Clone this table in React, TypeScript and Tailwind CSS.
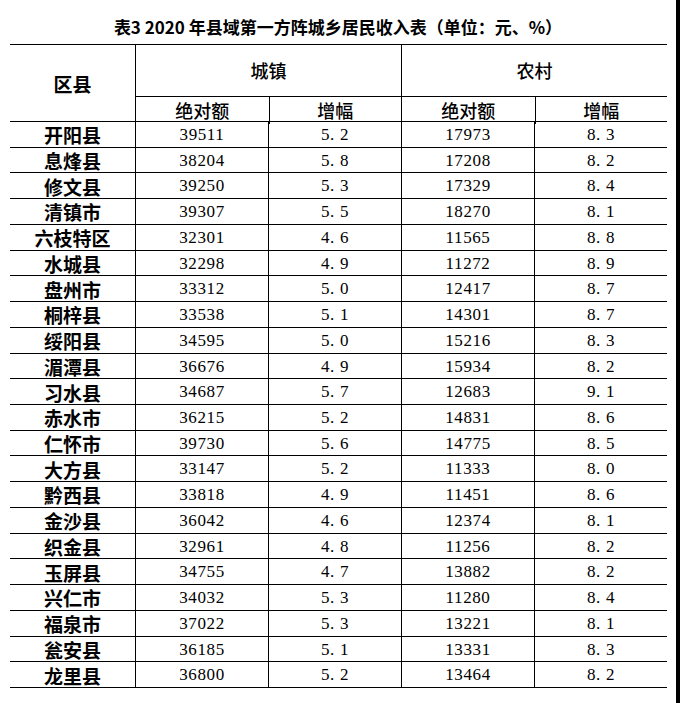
const rows: [string, string, string, string, string][] = [
  ["开阳县", "39511", "5.2", "17973", "8.3"],
  ["息烽县", "38204", "5.8", "17208", "8.2"],
  ["修文县", "39250", "5.3", "17329", "8.4"],
  ["清镇市", "39307", "5.5", "18270", "8.1"],
  ["六枝特区", "32301", "4.6", "11565", "8.8"],
  ["水城县", "32298", "4.9", "11272", "8.9"],
  ["盘州市", "33312", "5.0", "12417", "8.7"],
  ["桐梓县", "33538", "5.1", "14301", "8.7"],
  ["绥阳县", "34595", "5.0", "15216", "8.3"],
  ["湄潭县", "36676", "4.9", "15934", "8.2"],
  ["习水县", "34687", "5.7", "12683", "9.1"],
  ["赤水市", "36215", "5.2", "14831", "8.6"],
  ["仁怀市", "39730", "5.6", "14775", "8.5"],
  ["大方县", "33147", "5.2", "11333", "8.0"],
  ["黔西县", "33818", "4.9", "11451", "8.6"],
  ["金沙县", "36042", "4.6", "12374", "8.1"],
  ["织金县", "32961", "4.8", "11256", "8.2"],
  ["玉屏县", "34755", "4.7", "13882", "8.2"],
  ["兴仁市", "34032", "5.3", "11280", "8.4"],
  ["福泉市", "37022", "5.3", "13221", "8.1"],
  ["瓮安县", "36185", "5.1", "13331", "8.3"],
  ["龙里县", "36800", "5.2", "13464", "8.2"],
];

const cjk = "font-['Noto_Sans_CJK_SC',sans-serif]";
const num = "font-['Liberation_Serif',serif] text-[17px] tracking-[0.6px]";

function Rate({ value }: { value: string }) {
  const [a, b] = value.split(".");
  return (
    <span>
      {a}.<span className="ml-[5px]">{b}</span>
    </span>
  );
}

function SubHeader({ label }: { label: string }) {
  return (
    <div className="flex flex-col border-l border-black">
      <div className={`flex h-[52px] items-center justify-center border-b border-black text-[18px] font-medium ${cjk}`}>
        {label}
      </div>
      <div className={`grid flex-1 grid-cols-2 text-[18px] font-medium ${cjk}`}>
        <div className="flex items-center justify-center">绝对额</div>
        <div className="flex items-center justify-center border-l border-black">增幅</div>
      </div>
    </div>
  );
}

export default function App() {
  return (
    <div className="flex h-[703px] w-[680px] flex-col border-r-4 border-black bg-white text-black">
      <div
        className={`flex h-[44px] items-center justify-center pt-[10px] text-[17px] font-bold ${cjk}`}
      >
        表3 2020 年县域第一方阵城乡居民收入表（单位：元、%）
      </div>

      <div className="ml-[10px] w-[657px]">
        {/* header */}
        <div className="grid h-[78px] grid-cols-[125px_266px_266px] border-y border-black">
          <div className={`flex items-center justify-center text-[19px] font-bold ${cjk}`}>
            区县
          </div>
          <SubHeader label="城镇" />
          <SubHeader label="农村" />
        </div>

        {/* body */}
        <div className="grid h-[566px] grid-rows-[repeat(22,minmax(0,1fr))]">
          {rows.map(([name, uAbs, uRate, rAbs, rRate]) => (
            <div
              key={name}
              className="grid grid-cols-[125px_133px_133px_133px_133px] border-b border-black"
            >
              <div className={`flex items-center justify-center text-[19px] font-bold leading-none ${cjk}`}>
                {name}
              </div>
              <div className={`flex items-center justify-center border-l border-black ${num}`}>
                {uAbs}
              </div>
              <div className={`flex items-center justify-center border-l border-black ${num}`}>
                <Rate value={uRate} />
              </div>
              <div className={`flex items-center justify-center border-l border-black ${num}`}>
                {rAbs}
              </div>
              <div className={`flex items-center justify-center border-l border-black ${num}`}>
                <Rate value={rRate} />
              </div>
            </div>
          ))}
        </div>
      </div>
    </div>
  );
}
